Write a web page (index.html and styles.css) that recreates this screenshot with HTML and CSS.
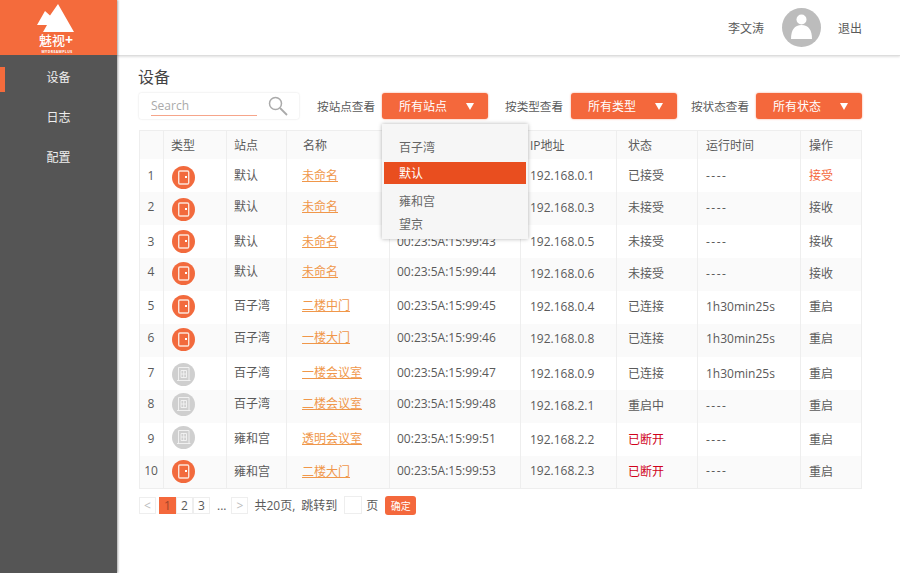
FILE: index.html
```html
<!DOCTYPE html>
<html lang="zh">
<head>
<meta charset="utf-8">
<title>设备</title>
<link rel="stylesheet" href="styles.css">
</head>
<body>
<svg class="defs" width="0" height="0">
  <symbol id="door" viewBox="0 0 23 23">
    <circle cx="11.5" cy="11.5" r="11.5" fill="#f26a3d"/>
    <rect x="6.700" y="5" width="10" height="13" rx="1.200" fill="none" stroke="#fde3d8" stroke-width="1.400"/>
    <rect x="13" y="10" width="2" height="2" fill="#fff"/>
  </symbol>
  <symbol id="room" viewBox="0 0 23 23">
    <circle cx="11.5" cy="11.5" r="11.5" fill="#cfcfcf"/>
    <path d="M6.500 17.500V4.500h10.500v13M5 17.500h13.500M9 7.500h5.500v7H9zM11.750 7.500v7M9 11h5.500" fill="none" stroke="#f4f4f4" stroke-width=".9"/>
  </symbol>
</svg>
<div class="app">
  <aside class="sidebar">
    <div class="brand">
      <svg class="peaks" width="38" height="28" viewBox="0 0 38 28"><path d="M0 21 8 7l5 4.500L21 0l16 28H6l4-7z" fill="#fff"/></svg>
      <div class="brand-name">魅视<span class="plus">+</span></div>
      <div class="brand-sub">MYDREAMPLUS</div>
    </div>
    <nav class="nav">
      <a class="nav-item active">设备</a>
      <a class="nav-item">日志</a>
      <a class="nav-item">配置</a>
    </nav>
  </aside>
  <div class="main">
    <header class="topbar">
      <span class="user">李文涛</span>
      <svg class="avatar" width="39" height="39" viewBox="0 0 39 39"><circle cx="19.5" cy="19.5" r="19.5" fill="#bcbcbc"/><circle cx="19.5" cy="11.5" r="5" fill="#fff"/><path d="M9 31c0-9 3.5-14 10.500-14S30 22 30 31z" fill="#fff"/></svg>
      <a class="logout">退出</a>
    </header>
    <main class="content">
      <h1 class="title">设备</h1>
      <div class="toolbar">
        <div class="search">
          <span class="search-input">Search</span>
          <svg class="search-icon" width="20" height="20" viewBox="0 0 20 20"><circle cx="7.500" cy="7.500" r="6" fill="none" stroke="#aaa" stroke-width="1.500"/><path d="m12 12 7 7" stroke="#aaa" stroke-width="1.800"/></svg>
        </div>
        <div class="filters">
          <div class="filter site-filter">
            <span class="filter-label">按站点查看</span>
            <button class="select">所有站点<span class="caret"></span></button>
            <ul class="menu">
              <li>百子湾</li>
              <li class="selected">默认</li>
              <li>雍和宫</li>
              <li>望京</li>
            </ul>
          </div>
          <div class="filter type-filter">
            <span class="filter-label">按类型查看</span>
            <button class="select">所有类型<span class="caret"></span></button>
          </div>
          <div class="filter state-filter">
            <span class="filter-label">按状态查看</span>
            <button class="select">所有状态<span class="caret"></span></button>
          </div>
        </div>
      </div>
      <table class="devices">
        <thead>
          <tr><th class="c-no"></th><th class="c-type">类型</th><th class="c-site">站点</th><th class="c-name">名称</th><th class="c-mac"></th><th class="c-ip">IP地址</th><th class="c-state">状态</th><th class="c-time">运行时间</th><th class="c-op">操作</th></tr>
        </thead>
        <tbody>
          <tr><td>1</td><td><svg class="ti"><use href="#door"/></svg></td><td>默认</td><td><a class="link">未命名</a></td><td>00:23:5A:15:99:41</td><td>192.168.0.1</td><td>已接受</td><td class="dash">----</td><td class="accept">接受</td></tr>
          <tr><td>2</td><td><svg class="ti"><use href="#door"/></svg></td><td>默认</td><td><a class="link">未命名</a></td><td>00:23:5A:15:99:42</td><td>192.168.0.3</td><td>未接受</td><td class="dash">----</td><td>接收</td></tr>
          <tr><td>3</td><td><svg class="ti"><use href="#door"/></svg></td><td>默认</td><td><a class="link">未命名</a></td><td>00:23:5A:15:99:43</td><td>192.168.0.5</td><td>未接受</td><td class="dash">----</td><td>接收</td></tr>
          <tr><td>4</td><td><svg class="ti"><use href="#door"/></svg></td><td>默认</td><td><a class="link">未命名</a></td><td>00:23:5A:15:99:44</td><td>192.168.0.6</td><td>未接受</td><td class="dash">----</td><td>接收</td></tr>
          <tr><td>5</td><td><svg class="ti"><use href="#door"/></svg></td><td>百子湾</td><td><a class="link">二楼中门</a></td><td>00:23:5A:15:99:45</td><td>192.168.0.4</td><td>已连接</td><td>1h30min25s</td><td>重启</td></tr>
          <tr><td>6</td><td><svg class="ti"><use href="#door"/></svg></td><td>百子湾</td><td><a class="link">一楼大门</a></td><td>00:23:5A:15:99:46</td><td>192.168.0.8</td><td>已连接</td><td>1h30min25s</td><td>重启</td></tr>
          <tr><td>7</td><td><svg class="ti"><use href="#room"/></svg></td><td>百子湾</td><td><a class="link">一楼会议室</a></td><td>00:23:5A:15:99:47</td><td>192.168.0.9</td><td>已连接</td><td>1h30min25s</td><td>重启</td></tr>
          <tr><td>8</td><td><svg class="ti"><use href="#room"/></svg></td><td>百子湾</td><td><a class="link">二楼会议室</a></td><td>00:23:5A:15:99:48</td><td>192.168.2.1</td><td>重启中</td><td class="dash">----</td><td>重启</td></tr>
          <tr><td>9</td><td><svg class="ti"><use href="#room"/></svg></td><td>雍和宫</td><td><a class="link">透明会议室</a></td><td>00:23:5A:15:99:51</td><td>192.168.2.2</td><td class="down">已断开</td><td class="dash">----</td><td>重启</td></tr>
          <tr><td>10</td><td><svg class="ti"><use href="#door"/></svg></td><td>雍和宫</td><td><a class="link">二楼大门</a></td><td>00:23:5A:15:99:53</td><td>192.168.2.3</td><td class="down">已断开</td><td class="dash">----</td><td>重启</td></tr>
        </tbody>
      </table>
      <div class="pager">
        <span class="pg ghost">&lt;</span>
        <span class="pages"><span class="pg current">1</span><span class="pg">2</span><span class="pg">3</span></span>
        <span class="dots">...</span>
        <span class="pg ghost">&gt;</span>
        <span class="total">共20页,</span>
        <span class="jump">跳转到</span>
        <span class="page-input"></span>
        <span class="unit">页</span>
        <button class="confirm">确定</button>
      </div>
    </main>
  </div>
</div>
</body>
</html>
```

FILE: styles.css
```css
* { box-sizing: border-box; }
html, body { margin: 0; height: 100%; }
body {
  font-family: "Open Sans", "Noto Sans CJK SC", sans-serif;
  font-size: 12px;
  color: #5a5a5a;
  background: #fff;
  overflow: hidden;
}
.defs { position: absolute; }
.app { display: flex; height: 573px; }

.sidebar {
  width: 117px;
  flex: none;
  background: #555;
  box-shadow: 1px 0 2px rgba(0,0,0,.35);
  position: relative;
  z-index: 2;
}
.brand {
  height: 55px;
  background: #f46b3c;
  display: flex;
  flex-direction: column;
  align-items: center;
  padding-top: 4px;
  color: #fff;
}
.peaks { display: block; margin-right: 6px; flex: none; }
.brand-name { font-size: 13px; line-height: 13px; font-weight: 500; margin: 1px 5px 0 0; }
.plus { font-size: 14px; font-weight: 700; }
.brand-sub { font-size: 3.500px; line-height: 4px; margin: 3px 3px 0 0; letter-spacing: .4px; font-weight: 700; }
.nav { display: flex; flex-direction: column; padding-top: 2px; }
.nav-item {
  height: 40px;
  display: flex;
  align-items: center;
  justify-content: center;
  color: #eee;
  position: relative;
}
.nav-item.active::before {
  content: "";
  position: absolute;
  left: 0;
  top: 10px;
  width: 5px;
  height: 25px;
  background: #f46b3c;
}

.main { flex: 1; min-width: 0; }
.topbar {
  height: 56px;
  display: flex;
  align-items: center;
  justify-content: flex-end;
  padding: 0 38px 0 0;
  border-bottom: 1px solid #ddd;
  box-shadow: 0 1px 2px rgba(0,0,0,.12);
}
.user { margin-right: 18px; }
.avatar { margin-right: 17px; }
.content { padding: 11px 38px 0 22px; }
.title { margin: 0 0 0 -1px; font-size: 16px; font-weight: 400; line-height: 20px; color: #444; }
.toolbar { display: flex; justify-content: space-between; margin-top: 6px; height: 26px; }
.search {
  width: 160px;
  height: 26px;
  display: flex;
  align-items: center;
  padding-left: 12px;
  box-shadow: 0 0 2px rgba(0,0,0,.15);
  border-radius: 2px;
}
.search-input {
  width: 106px;
  height: 19px;
  line-height: 17px;
  color: #aaa;
  border-bottom: 1px solid #f6a58a;
}
.search-icon { margin-left: 11px; }
.filters { display: flex; gap: 17px; }
.filter { display: flex; align-items: center; gap: 7px; position: relative; }
.type-filter { gap: 8px; }
.state-filter { margin-left: -3px; }
.filter-label { font-size: 11.600px; }
.select {
  width: 106px;
  height: 26px;
  padding: 0 11px 0 17px;
  border: 0;
  border-radius: 3px;
  background: #f4683c;
  box-shadow: 0 0 2px rgba(244,104,60,.7);
  color: #fff;
  font: inherit;
  display: flex;
  align-items: center;
  justify-content: space-between;
}
.caret {
  width: 0;
  height: 0;
  border-left: 4px solid transparent;
  border-right: 4px solid transparent;
  border-top: 7px solid #fff;
  margin-right: 3px;
}
.menu {
  position: absolute;
  left: 65px;
  top: 31px;
  width: 146px;
  height: 115px;
  margin: 0;
  padding: 11px 2px 0;
  list-style: none;
  background: #f6f6f6;
  box-shadow: 0 0 4px rgba(0,0,0,.3);
  z-index: 3;
}
.menu li { height: 23px; line-height: 25px; padding-left: 15px; color: #666; }
.menu li.selected { height: 22px; line-height: 24px; margin: 4px 0 5px; background: #e94e1f; color: #fff; }

.devices {
  width: 722px;
  margin-top: 11px;
  table-layout: fixed;
  border-collapse: collapse;
  border: 1px solid #eee;
}
.devices th {
  height: 28px;
  font-weight: 400;
  text-align: left;
  padding: 0 0 0 7px;
  background: #fafafa;
  border-left: 1px solid #eee;
}
.devices td {
  height: 33px;
  padding: 0 0 var(--s) 8px;
  border-left: 1px solid #eee;
  white-space: nowrap;
}
.devices tbody tr:nth-child(even) td { background: #fafafa; }
.c-no { width: 24px; }
.c-type { width: 63px; }
.c-site { width: 60px; }
.c-name { width: 103px; }
.c-mac { width: 131px; }
.c-ip { width: 96px; }
.c-state { width: 81px; }
.c-time { width: 103px; }
.c-op { width: 61px; }
.devices th.c-name { padding-left: 16px; }
.devices th.c-ip { padding-left: 9px; }
.devices th.c-state { padding-left: 11px; }
.devices th.c-time, .devices th.c-op { padding-left: 8px; }

/* rows in the reference sit slightly unevenly: --s lifts name-side cells, --e lifts data-side cells, --it/--ib nudge the icon */
.devices tbody tr { --s: 0px; --e: 0px; --it: 0px; --ib: 0px; }
.devices tbody tr:nth-child(1) { --it: 4px; }
.devices tbody tr:nth-child(2) { --s: 4px; --e: 2px; --it: 2px; }
.devices tbody tr:nth-child(4) { --s: 6px; --e: 2px; --ib: 2px; }
.devices tbody tr:nth-child(5) { --s: 4px; --e: 2px; --ib: 2px; }
.devices tbody tr:nth-child(6) { --s: 6px; --e: 4px; --ib: 2px; }
.devices tbody tr:nth-child(7) { --s: 2px; --it: 2px; }
.devices tbody tr:nth-child(8) { --s: 6px; --e: 2px; --ib: 4px; }
.devices tbody tr:nth-child(9) { --s: 2px; --ib: 4px; }
.devices tbody tr:nth-child(10) { --s: 2px; --e: 2px; }

.devices td:nth-child(1) { padding-left: 0; padding-right: 1px; text-align: center; }
.devices td:nth-child(2) { padding: var(--it) 0 var(--ib) 8px; }
.devices td:nth-child(3) { padding-left: 7px; }
.devices td:nth-child(4) { padding-left: 15px; }
.devices td:nth-child(5) { padding-left: 7px; }
.devices td:nth-child(n+6) { padding-bottom: var(--e); }
.devices td:nth-child(6) { padding-left: 9px; }
.devices td:nth-child(7) { padding-left: 11px; }
.ti { width: 23px; height: 23px; display: block; }
.link { color: #f0974a; text-decoration: underline; }
.accept { color: #f4683c; }
.down { color: #d0021b; }
.dash { letter-spacing: 1.500px; }

.pager { display: flex; align-items: center; margin-top: 6px; height: 20px; }
.pages { display: flex; margin-left: 3px; }
.pg {
  width: 17px;
  height: 17px;
  display: flex;
  align-items: center;
  justify-content: center;
  border: 1px solid #eee;
}
.pg.ghost { color: #bbb; }
.pg.current { background: #f4683c; border-color: #f4683c; color: #a0452a; }
.dots { margin: 0 5px 0 7px; }
.total { margin-left: 6px; }
.jump { margin-left: 6px; }
.page-input { width: 18px; height: 18px; margin-left: 7px; border: 1px solid #eee; }
.unit { margin-left: 4px; }
.confirm {
  width: 31px;
  height: 19px;
  margin-left: 7px;
  padding: 0;
  border: 0;
  border-radius: 3px;
  background: #f4683c;
  color: #fff;
  font: inherit;
  font-size: 10px;
}
```
